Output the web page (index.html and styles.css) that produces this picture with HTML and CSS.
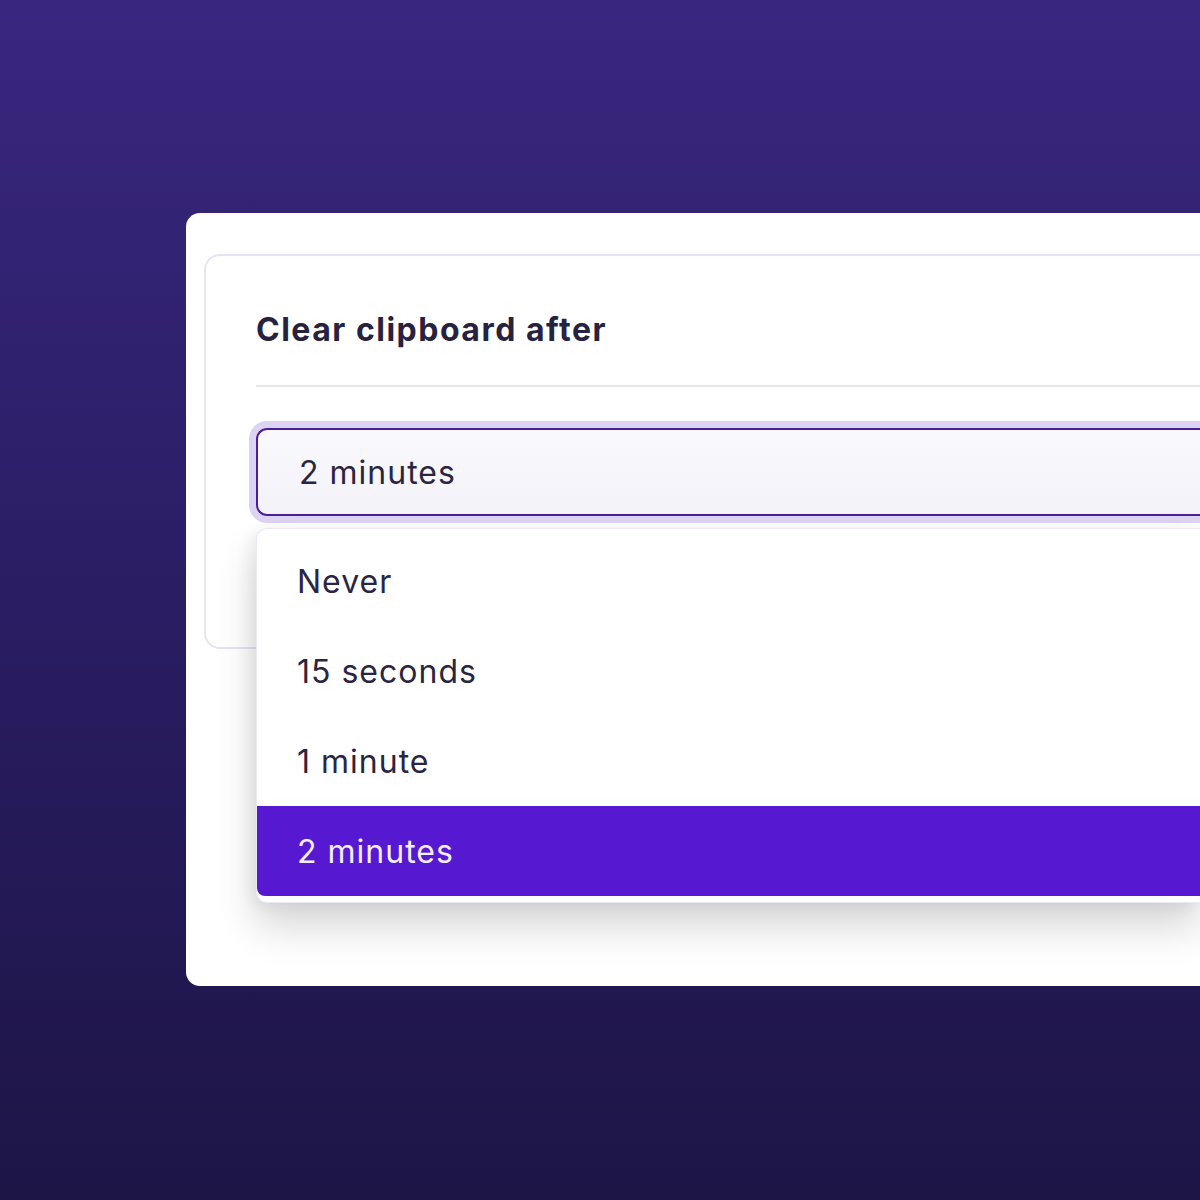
FILE: index.html
```html
<!DOCTYPE html>
<html lang="en">
<head>
<meta charset="utf-8">
<title>Clear clipboard after</title>
<link rel="stylesheet" href="styles.css">
</head>
<body>
<div class="stage">
  <div class="card">
    <div class="panel">
      <h2 class="title">Clear clipboard after</h2>
      <div class="divider"></div>
      <div class="select-wrap">
        <div class="select">2 minutes</div>
        <ul class="menu">
          <li class="option">Never</li>
          <li class="option">15 seconds</li>
          <li class="option">1 minute</li>
          <li class="option selected">2 minutes</li>
        </ul>
      </div>
    </div>
  </div>
</div>
</body>
</html>
```

FILE: styles.css
```css
html, body {
  margin: 0;
  padding: 0;
  height: 100%;
  overflow: hidden;
}
body {
  background: linear-gradient(180deg, #39277f 0%, #2a1d63 50%, #1d1546 100%);
  font-family: Inter, "Noto Sans", "Liberation Sans", sans-serif;
  color: #28233f;
}
.stage {
  width: 1200px;
  height: 1200px;
  padding: 213px 0 0 186px;
  box-sizing: border-box;
  overflow: hidden;
}
.card {
  width: 1014px;
  height: 773px;
  background: #ffffff;
  border-radius: 14px 0 0 14px;
  padding: 41px 0 0 18px;
  box-sizing: border-box;
  overflow: hidden;
}
.panel {
  height: 395px;
  border: 2px solid #e7e3f6;
  border-right: none;
  border-radius: 16px 0 0 16px;
  padding: 55px 0 0 50px;
  box-sizing: border-box;
}
.title {
  margin: 0;
  font-size: 32px;
  font-weight: 700;
  line-height: 38px;
  color: #27223f;
  letter-spacing: 1.5px;
}
.divider {
  height: 2px;
  background: #e6e4ef;
  margin-top: 36px;
}
.select-wrap {
  position: relative;
  margin-top: 41px;
}
.select {
  height: 88px;
  box-sizing: border-box;
  border: 2.5px solid #4b1f98;
  border-right: none;
  border-radius: 11px 0 0 11px;
  background: linear-gradient(180deg, #faf9fd 0%, #f3f2f8 100%);
  box-shadow: 0 0 0 7px #ddd3f4;
  padding-left: 41px;
  display: flex;
  align-items: center;
  font-size: 32px;
  letter-spacing: 1px;
  color: #2a2543;
}
.menu {
  position: absolute;
  left: 0;
  right: 0;
  top: 100px;
  margin: 0;
  padding: 7px 0 6px;
  list-style: none;
  background: #ffffff;
  border: 1px solid #ebe7f7;
  border-right: none;
  border-radius: 11px 0 0 11px;
  box-shadow: 0 24px 40px rgba(0, 0, 0, 0.16), -6px 4px 16px rgba(0, 0, 0, 0.06);
}
.option {
  height: 90px;
  display: flex;
  align-items: center;
  padding-left: 40px;
  font-size: 32px;
  letter-spacing: 1px;
  color: #2a2543;
}
.option.selected {
  background: #5718d2;
  color: #f4eefe;
  border-radius: 0 0 0 8px;
}
```
